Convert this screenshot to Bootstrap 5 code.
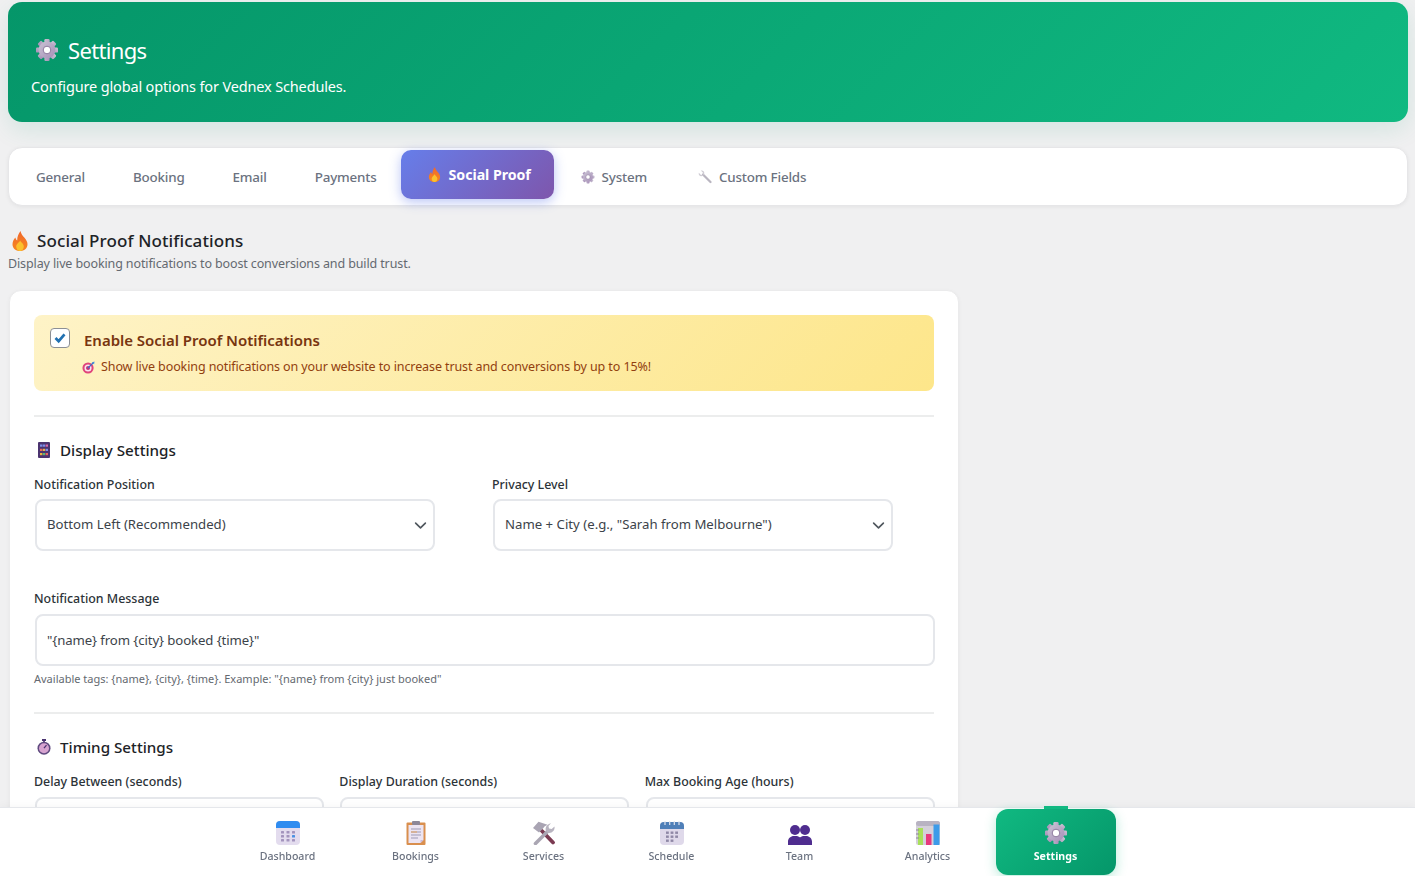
<!DOCTYPE html>
<html lang="en">
<head>
    <meta charset="utf-8">
    <title>Settings</title>
    <link href="https://cdn.jsdelivr.net/npm/bootstrap@5.3.0/dist/css/bootstrap.min.css" rel="stylesheet">
    <style>
        html, body { height: 100%; overflow: hidden; }
        body { background: #f0f0f1; font-family: "Noto Sans", "Open Sans", sans-serif; color: #1d2327; }
        .page-wrap { padding: 2px 7px 0 8px; }

        .hero-box { height: 120px; padding: 32px 23px 0; border-radius: 14px; color: #fff; background: linear-gradient(135deg, #059669 0%, #10b981 100%); box-shadow: 0 8px 24px rgba(5, 150, 105, .12); }
        .hero-title { font-size: 22px; font-weight: 400; line-height: 32px; margin: 0 0 8px; gap: 9px; padding-left: 4px; letter-spacing: -.65px; }
        .hero-sub { font-size: 14.5px; line-height: 24px; margin: 0; letter-spacing: -.15px; }
        .ico-24 { width: 24px; height: 24px; flex: none; }

        .tab-bar { height: 59px; margin-top: 25px; padding-left: 3px; background: #fff; border: 1px solid #e6e6e8; border-radius: 14px; box-shadow: 0 1px 4px rgba(0, 0, 0, .06); }
        .tab-item { font-size: 13.4px; font-weight: 500; line-height: 20px; color: #6b7280; padding: 0 24px; height: 49px; gap: 7px; text-decoration: none; letter-spacing: -.18px; }
        .tab-item.tab-on { position: relative; top: -2px; width: 153px; padding: 0 0 0 27px; gap: 8px; color: #fff; font-size: 14.2px; font-weight: 700; letter-spacing: -.05px; border-radius: 10px; background: linear-gradient(135deg, #667eea 0%, #7e56ac 100%); box-shadow: 0 3px 12px rgba(102, 126, 234, .45); }
        .tab-item.tab-gear { padding-left: 27px; padding-right: 24px; }
        .ico-14 { width: 14px; height: 14px; flex: none; }
        .ico-fire { width: 13px; height: 15px; flex: none; }

        .sec-head { margin: 23px 0 0; font-size: 17px; font-weight: 500; line-height: 24px; gap: 8px; padding-left: 3px; color: #1d2327; letter-spacing: .1px; }
        .sec-sub { font-size: 12.5px; line-height: 20px; margin: 1px 0 0; color: #646970; letter-spacing: -.12px; }

        .main-panel { width: 950px; margin: 16px 0 0 1px; padding: 24px; border: 1px solid #ebebec; border-radius: 12px; background: #fff; box-shadow: 0 1px 4px rgba(0, 0, 0, .04); }
        .promo-box { height: 76px; padding: 13px 16px; border-radius: 8px; background: linear-gradient(135deg, #fef3c7 0%, #fde68a 100%); gap: 14px; }
        .promo-box .form-check-input { width: 20px; height: 20px; margin: 0; flex: none; border: 1.5px solid #8c8f94; background-color: #fff; border-radius: 4px; background-image: url("data:image/svg+xml,%3csvg xmlns='http://www.w3.org/2000/svg' viewBox='0 0 20 20'%3e%3cpath fill='none' stroke='%232271b1' stroke-width='3' d='M5 10l3.5 3.5L15 6'/%3e%3c/svg%3e"); background-size: 100% 100%; }
        .promo-title { font-size: 15px; font-weight: 600; line-height: 22px; margin-top: 1px; color: #78350f; letter-spacing: -.03px; }
        .promo-text { font-size: 12.5px; line-height: 20px; margin-top: 6px; color: #92400e; gap: 6px; margin-left: -2px; letter-spacing: -.1px; }
        .ico-13 { width: 13px; height: 13px; flex: none; }

        .rule-line { height: 2px; margin: 24px 0 0; background: #eceded; }
        .group-head { font-size: 15.2px; font-weight: 500; line-height: 22px; margin: 22px 0 0; gap: 9px; padding-left: 3px; color: #1d2327; }
        .ico-15 { width: 14px; height: 16px; flex: none; }
        .field-row { margin-top: -1px; }
        .field-label { font-size: 12.4px; font-weight: 500; line-height: 18px; margin: 0 0 6px; display: block; color: #2c3338; }
        .field-row .field-label { margin-bottom: 5px; }
        .field-box { height: 52px; margin-left: 1px; padding: 0 10px; font-size: 13.2px; color: #3c434a; border: 2px solid #e5e7eb; border-radius: 8px; box-shadow: none; }
        select.field-box { width: 400px; padding-right: 30px; background-image: url("data:image/svg+xml,%3csvg xmlns='http://www.w3.org/2000/svg' viewBox='0 0 16 16'%3e%3cpath fill='none' stroke='%2350575e' stroke-width='2' stroke-linecap='round' stroke-linejoin='round' d='M2 5l6 6 6-6'/%3e%3c/svg%3e"); background-position: right 6px center; background-size: 13px 13px; }
        input.field-box { width: 900px; letter-spacing: -.1px; }
        .field-short { margin-top: 39px; }
        .help-line { font-size: 11px; line-height: 16px; margin: 5px 0 0; color: #646970; }
        .rule-gap { margin-top: 25px; }
        .timing-row { margin-top: -1px; }
        .timing-row input.field-box { width: 289px; }

        .dock-bar { position: fixed; left: 0; right: 0; bottom: 0; height: 69px; padding-right: 76px; background: #fff; border-top: 1px solid #e5e7eb; box-shadow: 0 -2px 8px rgba(0, 0, 0, .03); }
        .dock-item { width: 128px; height: 66px; margin-top: 1px; padding-top: 12px; font-size: 10.6px; line-height: 16px; font-weight: 500; color: #6b7280; text-decoration: none; gap: 3px; position: relative; }
        .dock-item.dock-on { width: 120px; margin: 1px 0 0 4px; color: #fff; font-weight: 700; border-radius: 12px; background: linear-gradient(135deg, #10b981 0%, #059669 100%); box-shadow: 0 3px 12px rgba(16, 185, 129, .3); }
        .dock-on::before { content: ""; position: absolute; top: -3px; left: 48px; width: 24px; height: 3px; background: #10b981; }
    </style>
</head>
<body>
    <svg width="0" height="0" class="position-absolute">
        <defs>
            <linearGradient id="gearFill" x1="0" y1="0" x2="1" y2="1"><stop offset="0" stop-color="#c9c3d3"/><stop offset="1" stop-color="#a78fb8"/></linearGradient>
            <linearGradient id="fireFill" x1="0" y1="0" x2="0" y2="1"><stop offset="0" stop-color="#f0682c"/><stop offset="1" stop-color="#f7861f"/></linearGradient>
            <symbol id="i-gear" viewBox="0 0 24 24">
                <g fill="url(#gearFill)">
                    <rect x="9.4" y="1" width="5.2" height="22" rx="1.2"/>
                    <rect x="9.4" y="1" width="5.2" height="22" rx="1.2" transform="rotate(45 12 12)"/>
                    <rect x="9.4" y="1" width="5.2" height="22" rx="1.2" transform="rotate(90 12 12)"/>
                    <rect x="9.4" y="1" width="5.2" height="22" rx="1.2" transform="rotate(135 12 12)"/>
                    <circle cx="12" cy="12" r="8.4"/>
                </g>
                <circle cx="12" cy="12" r="3.8" fill="#fff"/>
                <circle cx="12" cy="12" r="3.8" fill="none" stroke="#8e7a9e" stroke-width="1"/>
            </symbol>
            <symbol id="i-fire" viewBox="0 0 16 20">
                <path fill="url(#fireFill)" d="M8.5 0c.6 3.2 2.2 4.6 3.8 6.6C14.300 9 15.500 11 15.500 13.200 15.500 17.200 12.200 20 8 20S.5 17.200.5 13.200c0-3 1.600-5 2.900-6.700.3 1.400.8 2.300 1.800 2.900C5.200 5.800 6.300 2.800 8.500 0z"/>
                <path fill="#fbc02d" d="M8.200 9.500c.5 1.700 3.600 3.300 3.600 6 0 2.500-1.700 4.500-3.800 4.500s-3.800-2-3.800-4.500c0-2.600 3-4 4-6z"/>
            </symbol>
            <symbol id="i-target" viewBox="0 0 14 14">
                <circle cx="6.500" cy="7.500" r="6" fill="#e0457b"/>
                <circle cx="6.500" cy="7.500" r="3.800" fill="#fbe3ee"/>
                <circle cx="6.500" cy="7.500" r="2.200" fill="#c2337a"/>
                <path d="M6.500 7.500L12 2" stroke="#3f6fc9" stroke-width="1.400"/>
                <path d="M10.500 1.500L13.500 .5 13 3.500z" fill="#3f8fd9"/>
            </symbol>
            <symbol id="i-abacus" viewBox="0 0 14 16">
                <rect x="1" y="0" width="12" height="16" rx="1" fill="#4b3470"/>
                <rect x="3" y="2.500" width="2.400" height="2.200" fill="#7d8fe8"/><rect x="5.800" y="2.500" width="2.400" height="2.200" fill="#7d8fe8"/><rect x="8.600" y="2.500" width="2.400" height="2.200" fill="#d96aa8"/>
                <rect x="3" y="6.800" width="2.400" height="2.200" fill="#e86a5a"/><rect x="5.800" y="6.800" width="2.400" height="2.200" fill="#e8b04a"/><rect x="8.600" y="6.800" width="2.400" height="2.200" fill="#7d8fe8"/>
                <rect x="3" y="11" width="2.400" height="2.200" fill="#f0b23c"/><rect x="5.800" y="11" width="2.400" height="2.200" fill="#58b878"/><rect x="8.600" y="11" width="2.400" height="2.200" fill="#e86a5a"/>
            </symbol>
            <symbol id="i-watch" viewBox="0 0 14 16">
                <rect x="5" y="0" width="4" height="2" fill="#4b3470"/>
                <rect x="6.200" y="1.500" width="1.600" height="2" fill="#4b3470"/>
                <circle cx="7" cy="9.200" r="6.500" fill="#5f4a7f"/>
                <circle cx="7" cy="9.200" r="5" fill="#d7a3d0"/>
                <path d="M7 9.200L9.500 6.200" stroke="#4b3470" stroke-width="1.300"/>
            </symbol>
            <symbol id="i-wrench" viewBox="0 0 14 14">
                <path d="M5 4.500L12.500 12" stroke="#b9b5c0" stroke-width="2.200" stroke-linecap="round"/>
                <path d="M.8 2.800L3 5 5.200 4.800 4.800 2.600 2.800.6C4.600 0 6.300 1 6.300 3c0 1.800-1.600 3.300-3.400 3.200C1.200 6 .4 4.400.8 2.800z" fill="#cfccd4"/>
            </symbol>
            <symbol id="i-dash" viewBox="0 0 24 24">
                <rect x="0" y="0" width="24" height="24" rx="4" fill="#e3dcee"/>
                <path d="M0 7V4a4 4 0 0 1 4-4h16a4 4 0 0 1 4 4v3z" fill="#2f8cf0"/>
                <g fill="#a394bd">
                    <rect x="5" y="10" width="3" height="2.500" rx=".5"/><rect x="10.500" y="10" width="3" height="2.500" rx=".5"/><rect x="16" y="10" width="3" height="2.500" rx=".5"/>
                    <rect x="5" y="14" width="3" height="2.500" rx=".5"/><rect x="10.500" y="14" width="3" height="2.500" rx=".5"/>
                    <rect x="5" y="18" width="3" height="2.500" rx=".5"/><rect x="10.500" y="18" width="3" height="2.500" rx=".5"/><rect x="16" y="18" width="3" height="2.500" rx=".5"/>
                </g>
                <rect x="16" y="14" width="3" height="2.500" rx=".5" fill="#4a90e2"/>
            </symbol>
            <symbol id="i-clip" viewBox="0 0 24 24">
                <rect x="2.500" y="1.500" width="19" height="22.500" rx="1" fill="#d98f4e"/>
                <path d="M4.500 4h15v15l-3 3h-12z" fill="#ece4f2"/>
                <path d="M16.500 22l3-3h-3z" fill="#c9b8d6"/>
                <rect x="8" y="0" width="8" height="4" rx="1" fill="#8d8798"/>
                <path d="M7 8h10M7 11h10M7 14h10M7 17h7" stroke="#9d9ab5" stroke-width="1"/>
                <path d="M7 11h6" stroke="#e8a45c" stroke-width="1"/>
            </symbol>
            <symbol id="i-tools" viewBox="0 0 24 24">
                <path d="M10 10L21 21.500" stroke="#7b3b52" stroke-width="3.800" stroke-linecap="round"/>
                <path d="M1 7L6.500 .8l9 3-3 1.800-1.500 2L7 11.500z" fill="#a9a4b3"/>
                <path d="M3.500 22.500L15 11" stroke="#aaa6b3" stroke-width="3.600" stroke-linecap="round"/>
                <path d="M14 10c-1.200-3 .5-7 5-7.800L16.500 5l.5 2.500 2.700.6L22.500 5.500c.8 4.500-3.500 7.500-7 6z" fill="#b8b4c0"/>
            </symbol>
            <symbol id="i-sched" viewBox="0 0 24 24">
                <rect x="0" y="1" width="24" height="23" rx="4" fill="#dfd9ea"/>
                <path d="M0 8V5a4 4 0 0 1 4-4h16a4 4 0 0 1 4 4v3z" fill="#4f7fb8"/>
                <path d="M5 0v4M9.700 0v4M14.300 0v4M19 0v4" stroke="#dfe3ee" stroke-width="1.200"/>
                <g fill="#8f88a6">
                    <rect x="6" y="10.500" width="2.800" height="2.400"/><rect x="10.600" y="10.500" width="2.800" height="2.400"/><rect x="15.200" y="10.500" width="2.800" height="2.400"/>
                    <rect x="6" y="14.500" width="2.800" height="2.400"/><rect x="10.600" y="14.500" width="2.800" height="2.400"/><rect x="15.200" y="14.500" width="2.800" height="2.400"/>
                    <rect x="6" y="18.500" width="2.800" height="2.400"/><rect x="10.600" y="18.500" width="2.800" height="2.400"/>
                </g>
            </symbol>
            <symbol id="i-team" viewBox="0 0 24 24">
                <g fill="#4f2d8f">
                    <circle cx="7" cy="9" r="5"/>
                    <circle cx="17" cy="9" r="5"/>
                    <path d="M0 24v-3.500c0-3 2.500-5 5-5.500h4c2 .5 3 1.500 3 1.500s1-1 3-1.500h4c2.500.5 5 2.500 5 5.500V24z"/>
                </g>
            </symbol>
            <symbol id="i-chart" viewBox="0 0 24 24">
                <rect x="0" y="0" width="24" height="24" rx="2.500" fill="#d4d0da"/>
                <rect x="0" y="0" width="24" height="5" rx="2.500" fill="#b8b3c2"/>
                <rect x="2" y="7" width="5" height="17" fill="#a8e05a"/>
                <rect x="10" y="13" width="5.500" height="11" fill="#e8397d"/>
                <rect x="17.500" y="3.500" width="6" height="20.500" fill="#3d9be9"/>
                <path d="M0 9h3M0 13h3M0 17h3" stroke="#8d8798" stroke-width="1"/>
            </symbol>
        </defs>
    </svg>

    <div class="page-wrap">
        <div class="hero-box">
            <h1 class="hero-title d-flex align-items-center"><svg class="ico-24"><use href="#i-gear"/></svg>Settings</h1>
            <p class="hero-sub">Configure global options for Vednex Schedules.</p>
        </div>

        <div class="tab-bar d-flex align-items-center">
            <a class="tab-item d-flex align-items-center" href="#">General</a>
            <a class="tab-item d-flex align-items-center" href="#">Booking</a>
            <a class="tab-item d-flex align-items-center" href="#">Email</a>
            <a class="tab-item d-flex align-items-center" href="#">Payments</a>
            <a class="tab-item tab-on d-flex align-items-center" href="#"><svg class="ico-fire"><use href="#i-fire"/></svg>Social Proof</a>
            <a class="tab-item tab-gear d-flex align-items-center" href="#"><svg class="ico-14"><use href="#i-gear"/></svg>System</a>
            <a class="tab-item tab-gear d-flex align-items-center" href="#"><svg class="ico-14"><use href="#i-wrench"/></svg>Custom Fields</a>
        </div>

        <h2 class="sec-head d-flex align-items-center"><svg width="18" height="20"><use href="#i-fire"/></svg>Social Proof Notifications</h2>
        <p class="sec-sub">Display live booking notifications to boost conversions and build trust.</p>

        <div class="main-panel">
            <div class="promo-box d-flex align-items-start">
                <input class="form-check-input" type="checkbox" checked aria-label="Enable Social Proof Notifications">
                <div>
                    <div class="promo-title">Enable Social Proof Notifications</div>
                    <div class="promo-text d-flex align-items-center"><svg class="ico-13"><use href="#i-target"/></svg>Show live booking notifications on your website to increase trust and conversions by up to 15%!</div>
                </div>
            </div>

            <div class="rule-line"></div>

            <h3 class="group-head d-flex align-items-center"><svg class="ico-15"><use href="#i-abacus"/></svg>Display Settings</h3>
            <div class="row g-3 field-row">
                <div class="col-6">
                    <label class="field-label">Notification Position</label>
                    <select class="form-select field-box"><option>Bottom Left (Recommended)</option></select>
                </div>
                <div class="col-6">
                    <label class="field-label">Privacy Level</label>
                    <select class="form-select field-box"><option>Name + City (e.g., "Sarah from Melbourne")</option></select>
                </div>
            </div>

            <div class="field-short">
                <label class="field-label">Notification Message</label>
                <input class="form-control field-box" type="text" value="&quot;{name} from {city} booked {time}&quot;">
                <p class="help-line">Available tags: {name}, {city}, {time}. Example: "{name} from {city} just booked"</p>
            </div>

            <div class="rule-line rule-gap"></div>

            <h3 class="group-head d-flex align-items-center"><svg class="ico-15"><use href="#i-watch"/></svg>Timing Settings</h3>
            <div class="row g-3 timing-row">
                <div class="col-4">
                    <label class="field-label">Delay Between (seconds)</label>
                    <input class="form-control field-box" type="text" value="">
                </div>
                <div class="col-4">
                    <label class="field-label">Display Duration (seconds)</label>
                    <input class="form-control field-box" type="text" value="">
                </div>
                <div class="col-4">
                    <label class="field-label">Max Booking Age (hours)</label>
                    <input class="form-control field-box" type="text" value="">
                </div>
            </div>
        </div>
    </div>

    <nav class="dock-bar d-flex justify-content-center">
        <a class="dock-item d-flex flex-column align-items-center" href="#"><svg class="ico-24"><use href="#i-dash"/></svg>Dashboard</a>
        <a class="dock-item d-flex flex-column align-items-center" href="#"><svg class="ico-24"><use href="#i-clip"/></svg>Bookings</a>
        <a class="dock-item d-flex flex-column align-items-center" href="#"><svg class="ico-24"><use href="#i-tools"/></svg>Services</a>
        <a class="dock-item d-flex flex-column align-items-center" href="#"><svg class="ico-24"><use href="#i-sched"/></svg>Schedule</a>
        <a class="dock-item d-flex flex-column align-items-center" href="#"><svg class="ico-24"><use href="#i-team"/></svg>Team</a>
        <a class="dock-item d-flex flex-column align-items-center" href="#"><svg class="ico-24"><use href="#i-chart"/></svg>Analytics</a>
        <a class="dock-item dock-on d-flex flex-column align-items-center" href="#"><svg class="ico-24"><use href="#i-gear"/></svg>Settings</a>
    </nav>

    <script src="https://cdn.jsdelivr.net/npm/bootstrap@5.3.0/dist/js/bootstrap.bundle.min.js"></script>
</body>
</html>
